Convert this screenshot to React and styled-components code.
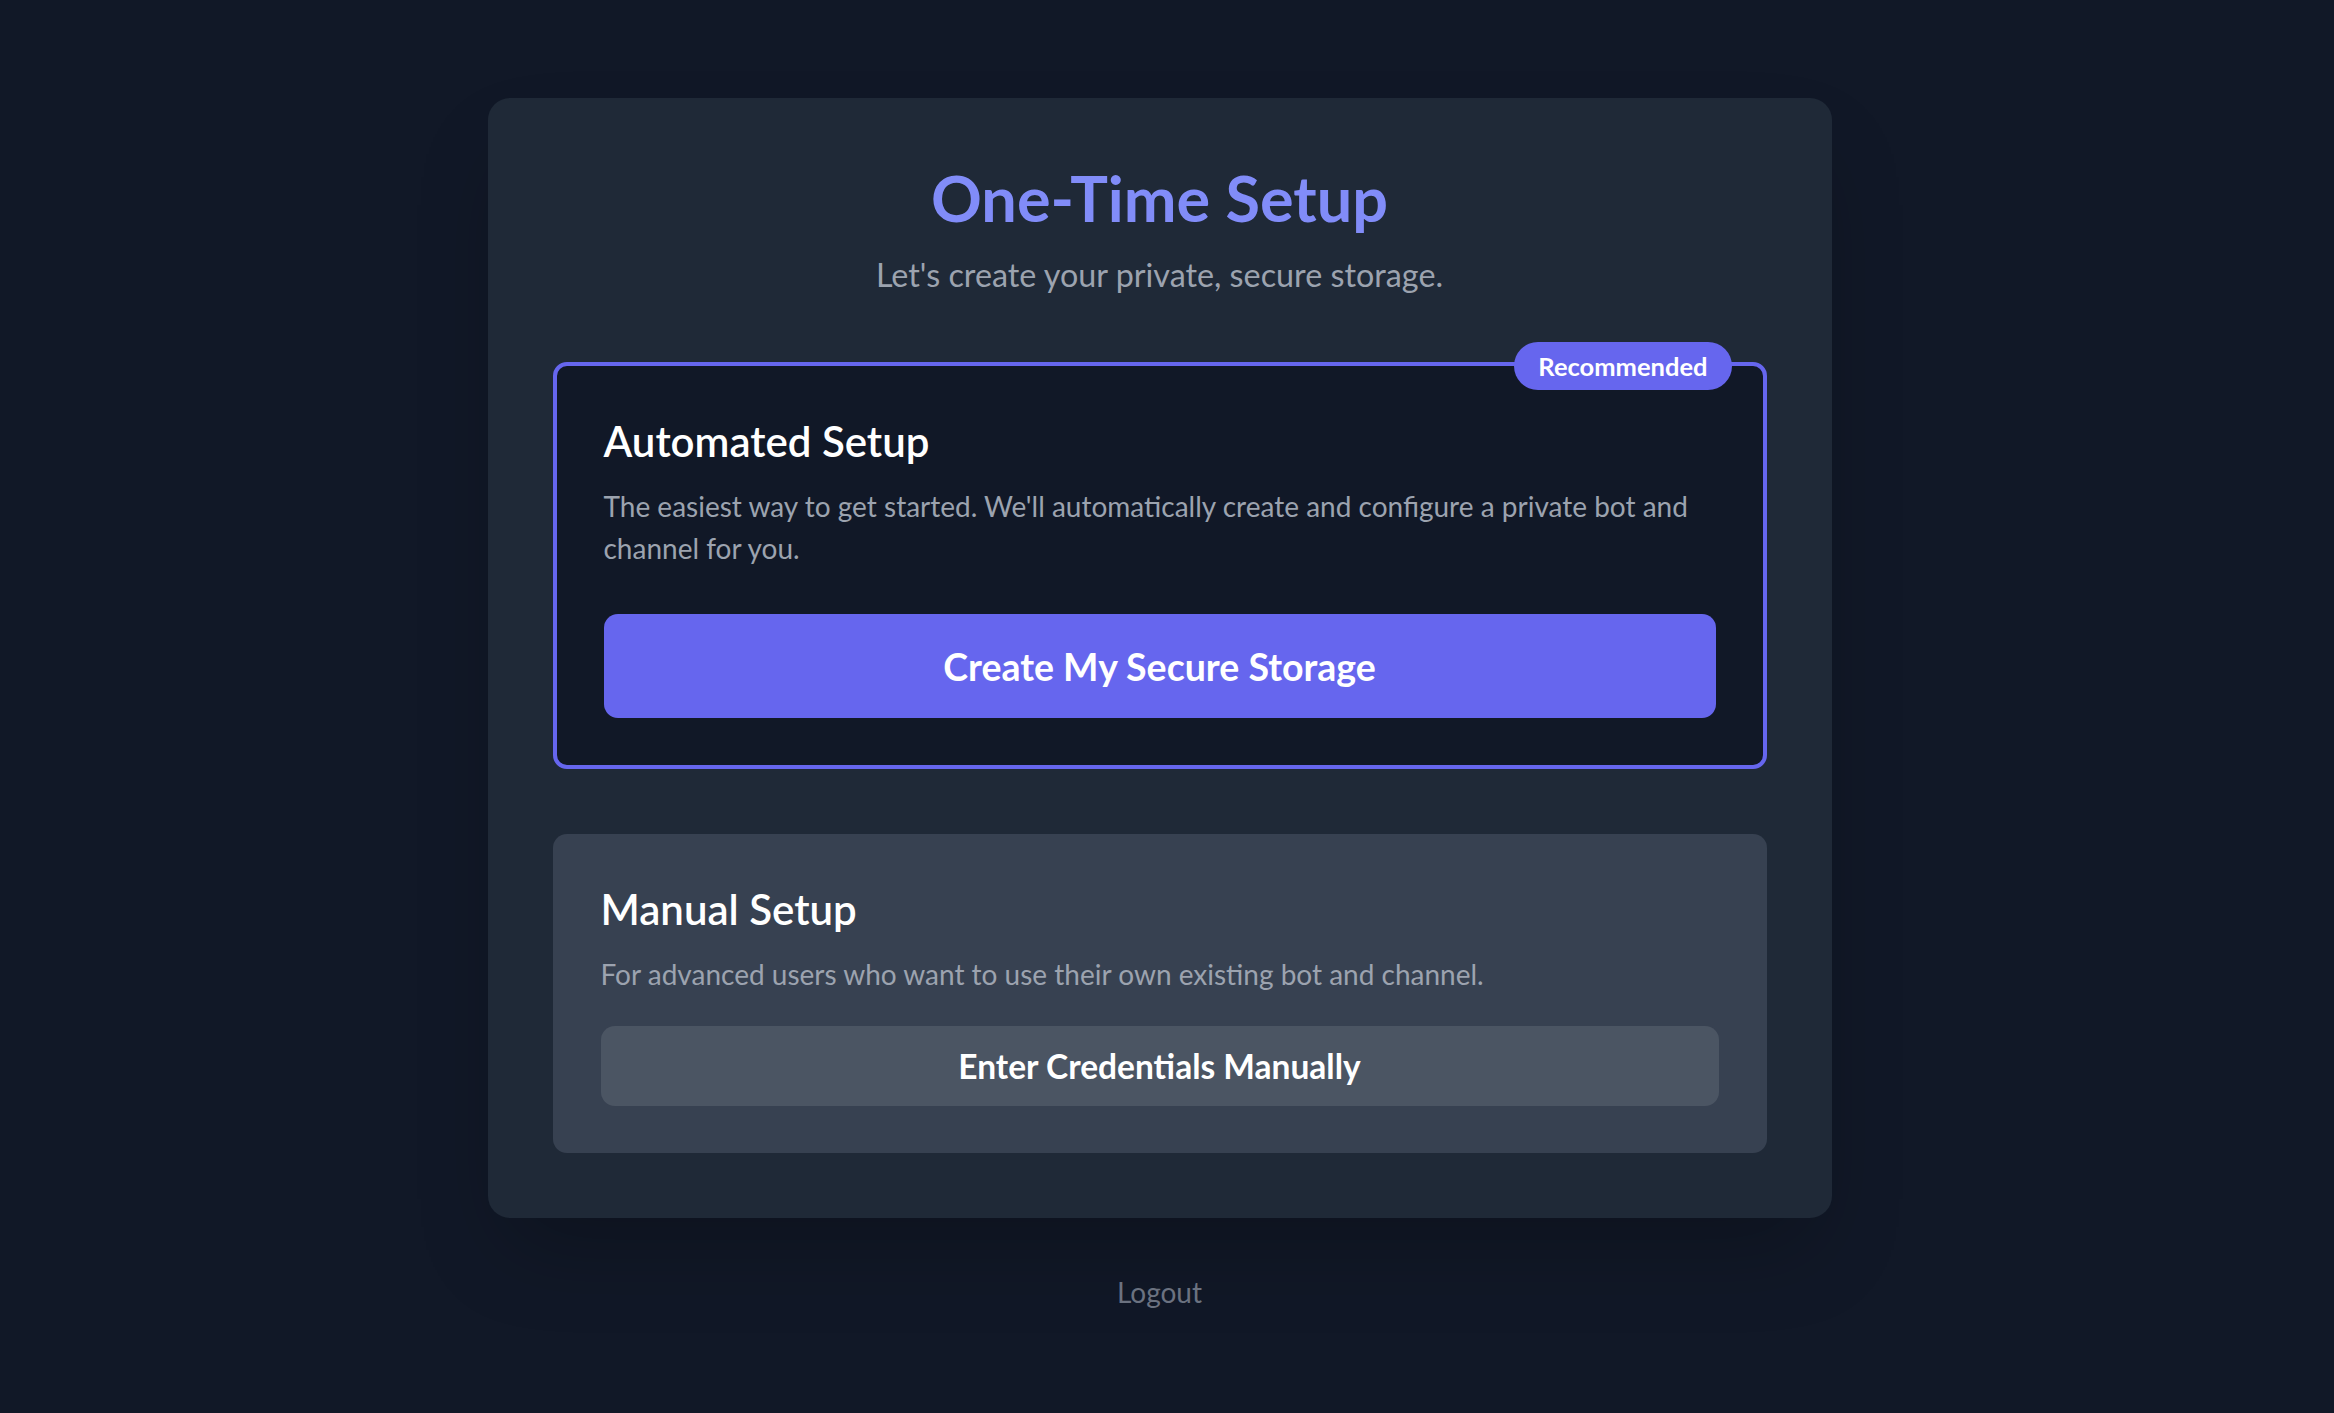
import React from "react";
import styled, { createGlobalStyle } from "styled-components";

const GlobalStyle = createGlobalStyle`
  html, body {
    margin: 0;
    padding: 0;
    background-color: #111827;
  }
  body {
    font-family: Lato, "Noto Sans", sans-serif;
    -webkit-font-smoothing: antialiased;
  }
  * {
    box-sizing: border-box;
  }
`;

const Page = styled.div`
  min-height: 100vh;
  display: flex;
  flex-direction: column;
  align-items: center;
  justify-content: center;
  padding: 0 15px 2px 0;
`;

const Card = styled.div`
  width: 1344px;
  background-color: #1f2937;
  border-radius: 22px;
  padding: 65px;
  box-shadow: 0 44px 88px -21px rgba(0, 0, 0, 0.25);
`;

const Header = styled.div`
  text-align: center;
  margin-bottom: 63px;
`;

const Title = styled.h1`
  margin: 0;
  font-size: 63px;
  line-height: 70px;
  font-weight: 700;
  color: #818cf8;
`;

const Subtitle = styled.p`
  margin: 17px 0 0;
  font-size: 32.3px;
  line-height: 49px;
  color: #9ca3af;
`;

const Options = styled.div`
  display: flex;
  flex-direction: column;
  gap: 65px;
`;

const Option = styled.div`
  position: relative;
  border-radius: 14px;
  background-color: ${(p) => (p.$featured ? "#111827" : "#374151")};
  border: ${(p) => (p.$featured ? "4px solid #6666ee" : "none")};
  padding: ${(p) => (p.$featured ? "47px" : "47px 48px")};
`;

const Badge = styled.span`
  position: absolute;
  top: -24px;
  right: 31px;
  height: 48px;
  padding: 0 24px;
  border-radius: 999px;
  background-color: #6666ee;
  color: #fff;
  font-size: 25.5px;
  line-height: 48px;
  font-weight: 700;
`;

const OptionTitle = styled.h2`
  margin: 0 0 16px;
  font-size: 42px;
  line-height: 56px;
  font-weight: 600;
  color: #fff;
`;

const OptionText = styled.p`
  margin: 0 0 ${(p) => p.$gap || "31px"};
  font-size: 28px;
  line-height: 42px;
  color: #9ca3af;
`;

const Button = styled.button`
  display: block;
  width: 100%;
  border: none;
  border-radius: 14px;
  cursor: pointer;
  font-family: inherit;
  color: #fff;
  font-weight: 700;
  background-color: ${(p) => (p.$primary ? "#6666ee" : "#4b5563")};
  font-size: ${(p) => (p.$primary ? "37.5px" : "33.5px")};
  line-height: 49px;
  padding: ${(p) => (p.$primary ? "27.5px 0" : "15.5px 0")};
`;

const Logout = styled.button`
  margin-top: 53px;
  background: none;
  border: none;
  padding: 0;
  cursor: pointer;
  font-family: inherit;
  font-size: 28px;
  line-height: 42px;
  color: #6b7280;
`;

const App = () => {
  return (
    <>
      <GlobalStyle />
      <Page>
        <Card>
          <Header>
            <Title>One-Time Setup</Title>
            <Subtitle>Let's create your private, secure storage.</Subtitle>
          </Header>
          <Options>
            <Option $featured>
              <Badge>Recommended</Badge>
              <OptionTitle>Automated Setup</OptionTitle>
              <OptionText $gap="45px">
                The easiest way to get started. We'll automatically create and
                configure a private bot and channel for you.
              </OptionText>
              <Button $primary>Create My Secure Storage</Button>
            </Option>
            <Option>
              <OptionTitle>Manual Setup</OptionTitle>
              <OptionText>
                For advanced users who want to use their own existing bot and
                channel.
              </OptionText>
              <Button>Enter Credentials Manually</Button>
            </Option>
          </Options>
        </Card>
        <Logout>Logout</Logout>
      </Page>
    </>
  );
};

export default App;
